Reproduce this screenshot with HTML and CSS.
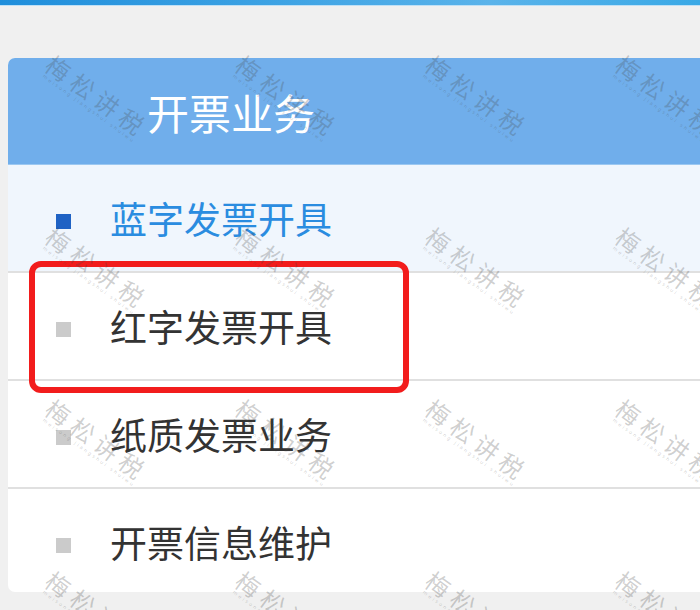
FILE: index.html
```html
<!DOCTYPE html>
<html lang="zh-CN">
<head>
<meta charset="utf-8">
<title>开票业务</title>
<link rel="stylesheet" href="styles.css">
</head>
<body>
<div class="topbar"></div>
<main class="page">
  <section class="panel">
    <header class="panel-head">开票业务</header>
    <ul class="menu">
      <li class="menu-item active"><span class="dot"></span><span class="label">蓝字发票开具</span></li>
      <li class="menu-item"><span class="dot"></span><span class="label">红字发票开具</span></li>
      <li class="menu-item"><span class="dot"></span><span class="label">纸质发票业务</span></li>
      <li class="menu-item"><span class="dot"></span><span class="label">开票信息维护</span></li>
    </ul>
    <div class="highlight"></div>
  </section>
</main>
<div class="watermarks" aria-hidden="true">
  <div class="wm"><span class="wm-main">梅松讲税</span><span class="wm-sub">meisong jiangshui shuiwu</span></div>
  <div class="wm"><span class="wm-main">梅松讲税</span><span class="wm-sub">meisong jiangshui shuiwu</span></div>
  <div class="wm"><span class="wm-main">梅松讲税</span><span class="wm-sub">meisong jiangshui shuiwu</span></div>
  <div class="wm"><span class="wm-main">梅松讲税</span><span class="wm-sub">meisong jiangshui shuiwu</span></div>
  <div class="wm"><span class="wm-main">梅松讲税</span><span class="wm-sub">meisong jiangshui shuiwu</span></div>
  <div class="wm"><span class="wm-main">梅松讲税</span><span class="wm-sub">meisong jiangshui shuiwu</span></div>
  <div class="wm"><span class="wm-main">梅松讲税</span><span class="wm-sub">meisong jiangshui shuiwu</span></div>
  <div class="wm"><span class="wm-main">梅松讲税</span><span class="wm-sub">meisong jiangshui shuiwu</span></div>
  <div class="wm"><span class="wm-main">梅松讲税</span><span class="wm-sub">meisong jiangshui shuiwu</span></div>
  <div class="wm"><span class="wm-main">梅松讲税</span><span class="wm-sub">meisong jiangshui shuiwu</span></div>
  <div class="wm"><span class="wm-main">梅松讲税</span><span class="wm-sub">meisong jiangshui shuiwu</span></div>
  <div class="wm"><span class="wm-main">梅松讲税</span><span class="wm-sub">meisong jiangshui shuiwu</span></div>
  <div class="wm"><span class="wm-main">梅松讲税</span><span class="wm-sub">meisong jiangshui shuiwu</span></div>
  <div class="wm"><span class="wm-main">梅松讲税</span><span class="wm-sub">meisong jiangshui shuiwu</span></div>
  <div class="wm"><span class="wm-main">梅松讲税</span><span class="wm-sub">meisong jiangshui shuiwu</span></div>
  <div class="wm"><span class="wm-main">梅松讲税</span><span class="wm-sub">meisong jiangshui shuiwu</span></div>
</div>
</body>
</html>
```
FILE: styles.css
```css
html, body {
  margin: 0;
  padding: 0;
}
body {
  width: 700px;
  height: 610px;
  overflow: hidden;
  position: relative;
  background: #f0f0f0;
  font-family: "Noto Sans CJK SC", "Noto Sans", sans-serif;
}
.topbar {
  height: 5px;
  background: linear-gradient(90deg, #1f8edb 0%, #3ea3e4 40%, #5ab3ea 70%, #3aa9e6 100%);
  border-bottom: 1px solid #bfe0f6;
}
.page {
  padding: 52px 0 0 8px;
}
.panel {
  position: relative;
  width: 710px;
  height: 534px;
  background: #ffffff;
  border-radius: 7px;
  overflow: hidden;
}
.panel-head {
  height: 106px;
  display: flex;
  align-items: center;
  padding-left: 139px;
  background: #70aeeb;
  border-bottom: 1px solid #9cc8f1;
  color: #ffffff;
  font-size: 42px;
}
.menu {
  list-style: none;
  margin: 0;
  padding: 0;
}
.menu-item {
  height: 106px;
  display: flex;
  align-items: center;
  padding-left: 48px;
  border-bottom: 2px solid #e0e0e0;
  color: #333333;
  font-size: 37px;
}
.menu-item:last-child {
  border-bottom: none;
}
.menu-item.active {
  background: #f0f6fd;
  color: #2a8ce0;
}
.dot {
  width: 15px;
  height: 15px;
  margin-top: 6px;
  margin-right: 39px;
  background: #cbcbcb;
  flex: none;
}
.active .dot {
  background: #1f62c4;
}
.highlight {
  position: absolute;
  left: 21px;
  top: 203px;
  width: 368px;
  height: 120px;
  border: 6px solid #f21c1c;
  border-radius: 12px;
}
.watermarks {
  position: absolute;
  inset: 0;
  pointer-events: none;
  display: grid;
  grid-template-columns: repeat(4, 190px);
  grid-auto-rows: 172px;
  padding: 49px 0 0 49px;
  overflow: hidden;
}
.wm {
  display: flex;
  flex-direction: column;
  align-items: flex-start;
  transform: rotate(36deg);
  transform-origin: 0 12px;
  color: rgba(70, 70, 70, 0.26);
  white-space: nowrap;
}
.wm-main {
  font-size: 24px;
  line-height: 24px;
  letter-spacing: 6px;
}
.wm-sub {
  font-family: "DejaVu Sans", sans-serif;
  font-size: 5px;
  line-height: 7px;
  letter-spacing: 2px;
  padding-left: 4px;
}
```
